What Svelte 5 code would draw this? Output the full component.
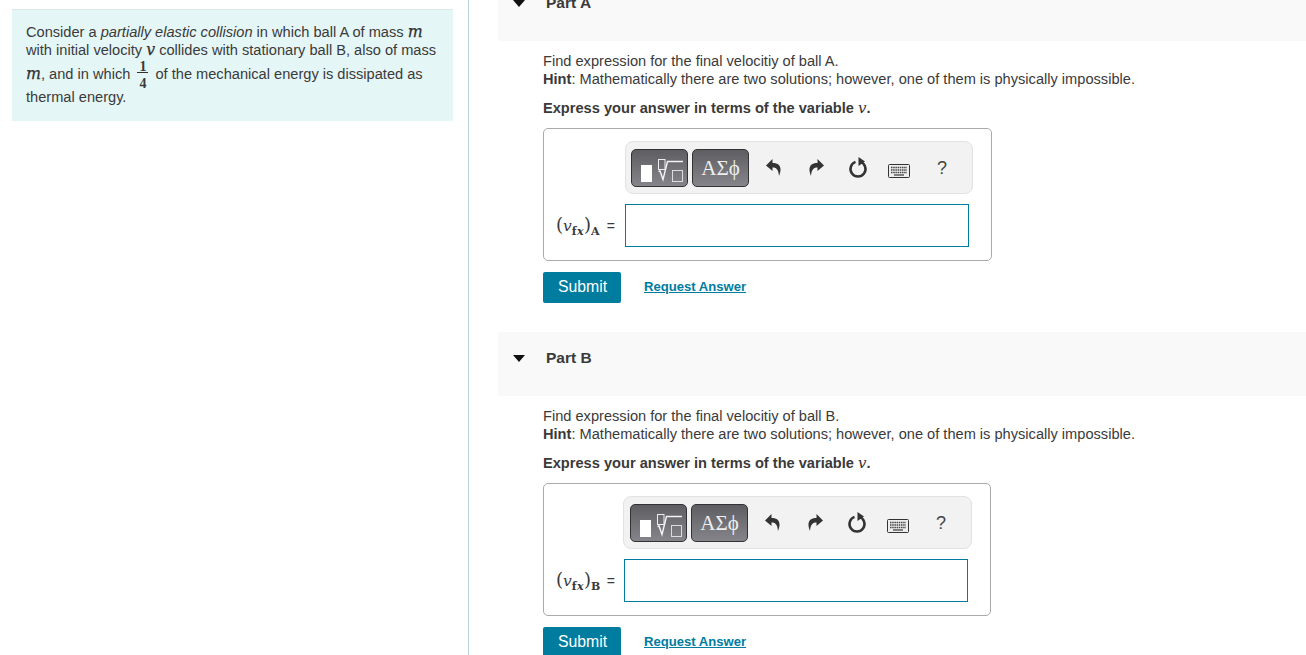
<script>
	const parts = [
		{ id: 'a', name: 'Part A', ball: 'A' },
		{ id: 'b', name: 'Part B', ball: 'B' }
	];
</script>

<div class="page">
	<aside class="intro-col">
		<div class="intro">
			Consider a <em>partially elastic collision</em> in which ball A of mass <span class="math">m</span>
			with initial velocity <span class="math">v</span> collides with stationary ball B, also of mass
			<span class="math">m</span>, and in which
			<span class="frac"><span class="num">1</span><span class="den">4</span></span>
			of the mechanical energy is dissipated as thermal energy.
		</div>
	</aside>

	<main class="parts">
		{#each parts as part}
			<section class="part part-{part.id}">
				<header class="part-head">
					<span class="caret"></span>
					<h2>{part.name}</h2>
				</header>
				<div class="part-body">
					<p class="prompt">
						Find expression for the final velocitiy of ball {part.ball}.<br />
						<b>Hint</b>: Mathematically there are two solutions; however, one of them is physically impossible.
					</p>
					<p class="express">
						<b>Express your answer in terms of the variable <span class="math thin">v</span>.</b>
					</p>
					<div class="answer">
						<div class="toolbar">
							<button class="tpl tpl-root" aria-label="Templates">
								<svg width="55" height="36" viewBox="0 0 55 36">
									<rect x="9" y="15" width="11" height="17" fill="#fff" />
									<rect x="26.500" y="9.500" width="6.500" height="10" fill="none" stroke="#eee" />
									<path d="M26.500 21.500l1.500-.5 3 8.500 4.500-18h15.500" fill="none" stroke="#f4f4f4" stroke-width="1.400" />
									<rect x="40.500" y="20.500" width="10" height="11" fill="none" stroke="#ddd" />
								</svg>
							</button>
							<button class="tpl tpl-greek">ΑΣϕ</button>
							<span class="tool undo">
								<svg width="15" height="17" viewBox="0 0 15 17">
									<path d="M6.500 0 0 6.500 6.500 12V8.500C10 8.500 12.500 10 13 17 16 10 15 4 6.500 4z" fill="#333" />
								</svg>
							</span>
							<span class="tool">
								<svg width="15" height="17" viewBox="0 0 15 17">
									<path transform="matrix(-1 0 0 1 15 0)" d="M6.500 0 0 6.500 6.500 12V8.500C10 8.500 12.500 10 13 17 16 10 15 4 6.500 4z" fill="#333" />
								</svg>
							</span>
							<span class="tool">
								<svg width="20" height="21" viewBox="0 0 20 21">
									<path d="M7.500 4.930a7.500 7.500 0 1 0 5 0" fill="none" stroke="#333" stroke-width="2.500" />
									<path d="M10.500 0v9l6.500-4.500z" fill="#333" />
								</svg>
							</span>
							<span class="tool kbd">
								<svg width="22" height="14" viewBox="0 0 22 14">
									<rect x=".5" y=".5" width="21" height="13" rx="1" fill="#eee" stroke="#333" />
									<path d="M3 3.500h16M3 6h16M3 8.500h16" stroke="#444" stroke-width="1.300" stroke-dasharray="1.500 .7" />
									<path d="M6 11h10" stroke="#444" stroke-width="1.300" />
								</svg>
							</span>
							<span class="tool help">?</span>
						</div>
						<div class="entry">
							<span class="label">
								<span class="var"><span class="paren">(</span><i>v</i><sub class="inner">f<i>x</i></sub><span class="paren">)</span><sub>{part.ball}</sub></span>
								<span class="eq">=</span>
							</span>
							<input type="text" aria-label="Answer" />
						</div>
					</div>
					<div class="actions">
						<button class="submit">Submit</button>
						<a href="#answer" class="request">Request Answer</a>
					</div>
				</div>
			</section>
		{/each}
	</main>
</div>

<style>
	:global(body) {
		margin: 0;
		background: #fff;
	}

	.page {
		display: flex;
		height: 655px;
		overflow: hidden;
		font-family: 'Liberation Sans', Arial, sans-serif;
		font-size: 14.62px;
		line-height: 18px;
		color: #3a3a3a;
	}

	.intro-col {
		box-sizing: border-box;
		width: 469px;
		flex: none;
		padding: 9px 15px 0 12px;
		border-right: 1px solid #b9d3e2;
	}

	.intro {
		background: #e5f6f7;
		border-top: 1px solid #dde6e8;
		padding: 13px 14px 15px;
	}

	.math {
		font-family: 'DejaVu Serif', serif;
		font-style: italic;
		font-size: 15.800px;
		line-height: 0;
		color: #333;
		-webkit-text-stroke: 0.25px #333;
	}

	.math.thin {
		font-size: 15px;
		font-weight: 400;
		-webkit-text-stroke: 0;
	}

	.frac {
		display: inline-flex;
		flex-direction: column;
		vertical-align: 8px;
		text-align: center;
		margin: 0 3px;
		padding-top: 2px;
		font-family: 'Liberation Serif', serif;
		font-weight: 700;
		font-size: 14px;
		line-height: 11px;
	}

	.num {
		border-bottom: 1px solid #333;
		padding: 0 2px;
	}

	.den {
		padding-top: 5px;
		margin-bottom: -1px;
	}

	.parts {
		flex: 1;
		margin-top: -23px;
		margin-left: 29px;
		min-width: 0;
	}

	.part-head {
		display: flex;
		align-items: flex-start;
		gap: 21px;
		height: 64px;
		box-sizing: border-box;
		padding: 17px 0 0 15px;
		background: #f9f9f9;
	}

	.caret {
		width: 0;
		height: 0;
		margin-top: 6px;
		border-left: 6.500px solid transparent;
		border-right: 6.500px solid transparent;
		border-top: 7px solid #111;
	}

	h2 {
		margin: 0;
		font-size: 15.500px;
		line-height: 18px;
		font-weight: 700;
	}

	.part-body {
		padding: 11px 0 29px 45px;
	}

	p {
		margin: 0;
	}

	.express {
		margin-top: 11px;
	}

	.answer {
		box-sizing: border-box;
		width: 449px;
		margin-top: 11px;
		padding: 12px 22px 13px 11px;
		border: 1px solid #aaa;
		border-radius: 5px;
	}

	.part-b .answer {
		width: 448px;
	}

	.toolbar {
		display: flex;
		align-items: center;
		box-sizing: border-box;
		height: 53px;
		width: 348px;
		margin: 0 -3px 0 70px;
		padding-left: 5px;
		background: #f2f2f2;
		border: 1px solid #e2e2e2;
		border-radius: 8px;
	}

	.part-b .toolbar {
		width: 349px;
		margin-left: 68px;
		padding-left: 6px;
	}

	.tpl {
		box-sizing: border-box;
		width: 57px;
		height: 38px;
		padding: 0;
		margin-right: 4px;
		border: 1px solid #333;
		border-radius: 5px;
		background: linear-gradient(#5e5e62, #84848a);
		color: #eee;
		font-family: 'Liberation Serif', serif;
		font-size: 21px;
		line-height: 36px;
	}

	.tpl svg {
		display: block;
	}

	.tool {
		display: flex;
		justify-content: center;
		width: 42px;
	}

	.undo {
		padding-right: 2px;
		box-sizing: border-box;
	}

	.kbd {
		padding-top: 6px;
		padding-right: 2px;
		box-sizing: border-box;
	}

	.help {
		font-size: 18px;
		color: #444;
	}

	.entry {
		display: flex;
		align-items: center;
		margin-top: 10px;
	}

	.label {
		box-sizing: border-box;
		display: flex;
		justify-content: space-between;
		align-items: center;
		width: 70px;
		padding: 0 10px 0 1px;
	}

	.part-b .label {
		width: 69px;
		padding-right: 9px;
	}

	.var {
		font-family: 'DejaVu Serif', serif;
		font-size: 15.500px;
		white-space: nowrap;
	}

	.paren {
		font-size: 18px;
	}

	.var sub {
		font-size: 11px;
		font-weight: 700;
		line-height: 0;
	}

	.var sub.inner {
		letter-spacing: 0.4px;
	}

	.eq {
		font-size: 14px;
	}

	input {
		box-sizing: border-box;
		width: 344px;
		height: 43px;
		border: 1px solid #007c9f;
		background: #fff;
		outline: none;
	}

	.actions {
		display: flex;
		align-items: center;
		gap: 23px;
		margin-top: 11px;
	}

	.submit {
		width: 78px;
		height: 31px;
		padding: 0 0 1px 1px;
		border: none;
		border-radius: 2px;
		background: #007c9f;
		color: #fff;
		font-family: inherit;
		font-size: 15.800px;
	}

	.request {
		margin-bottom: 2px;
		color: #007c9f;
		font-size: 13.100px;
		font-weight: 700;
	}
</style>
